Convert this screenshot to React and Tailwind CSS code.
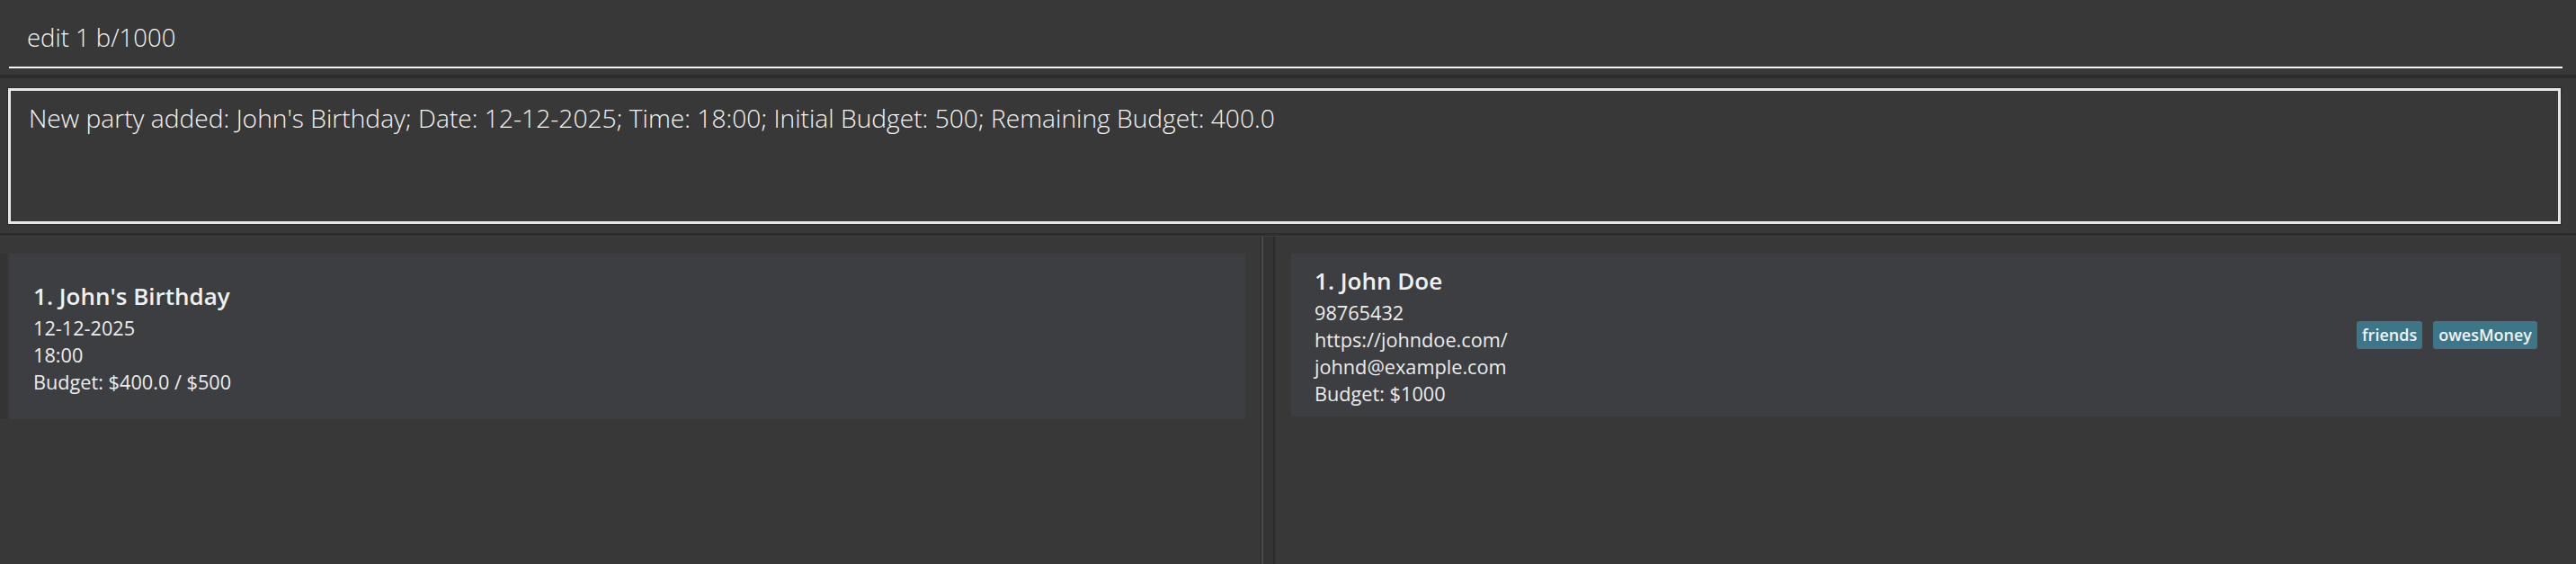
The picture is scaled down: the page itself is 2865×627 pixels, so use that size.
import React from 'react';

const parties = [
  { id: 1, name: "John's Birthday", date: '12-12-2025', time: '18:00', budget: 'Budget: $400.0 / $500' },
];

const persons = [
  {
    id: 1,
    name: 'John Doe',
    phone: '98765432',
    site: 'https://johndoe.com/',
    email: 'johnd@example.com',
    budget: 'Budget: $1000',
    tags: ['friends', 'owesMoney'],
  },
];

const PartyCard = ({ index, party }) => (
  <div className="flex h-[184px]">
    <div className="w-[8px] bg-[#333333]" />
    <div className="w-[2px]" />
    <div className="flex-1 bg-[#3c3e41] flex flex-col justify-center pl-[27px]">
      <div className="text-[26px] leading-[42px] font-semibold text-[#f0f0f0]">
        {index}. {party.name}
      </div>
      <div className="text-[21.7px] leading-[30px] text-[#ececec]">{party.date}</div>
      <div className="text-[21.7px] leading-[30px] text-[#ececec]">{party.time}</div>
      <div className="text-[21.7px] leading-[30px] text-[#ececec]">{party.budget}</div>
    </div>
  </div>
);

const PersonCard = ({ index, person }) => (
  <div className="flex h-[181px] bg-[#3c3e41] pl-[26px] pr-[26px]">
    <div className="flex-1 flex flex-col pt-[9px]">
      <div className="text-[26px] leading-[42px] font-semibold text-[#f0f0f0]">
        {index}. {person.name}
      </div>
      <div className="text-[21.7px] leading-[30px] text-[#ececec]">{person.phone}</div>
      <div className="text-[21.7px] leading-[30px] text-[#ececec]">{person.site}</div>
      <div className="text-[21.7px] leading-[30px] text-[#ececec]">{person.email}</div>
      <div className="text-[21.7px] leading-[30px] text-[#ececec]">{person.budget}</div>
    </div>
    <div className="flex items-center gap-[12px]">
      {person.tags.map((t) => (
        <span
          key={t}
          className="h-[31px] px-[6px] flex items-center rounded-[3px] bg-[#3e7689] text-[18px] font-semibold text-[#eef3f5]"
        >
          {t}
        </span>
      ))}
    </div>
  </div>
);

export default function App() {
  return (
    <div
      className="w-[2865px] h-[627px] bg-[#383838] flex flex-col overflow-hidden"
      style={{ fontFamily: '"Open Sans", Lato, sans-serif' }}
    >
      {/* Command box */}
      <div className="ml-[10px] mr-[15px] h-[76px] pt-[24px] border-b-2 border-[#f4f4f4]">
        <div className="pl-[20px] text-[27.5px] leading-[36px] font-light text-[#f5f5f5]">
          edit 1 b/1000
        </div>
      </div>
      <div className="h-[7px]" />
      <div className="h-[4px] bg-[#2d2d2d]" />
      <div className="h-[10px]" />

      {/* Result display */}
      <div className="ml-[8px] mr-[16px] h-[153px] border border-[#2b2b2b]">
        <div className="h-full border-[3px] border-[#e6e6e6] pt-[12px] pl-[20px]">
          <div className="text-[28.2px] leading-[36px] font-light text-[#f5f5f5]">
            New party added: John's Birthday; Date: 12-12-2025; Time: 18:00; Initial Budget: 500; Remaining Budget: 400.0
          </div>
        </div>
      </div>
      <div className="h-[9px]" />
      <div className="h-[3px] bg-[#2d2d2d]" />
      <div className="h-[1px] bg-[#404040]" />

      {/* Lists */}
      <div className="flex-1 flex">
        <div className="w-[1402px] pt-[19px] pr-[17px]">
          {parties.map((p, i) => (
            <PartyCard key={p.id} index={i + 1} party={p} />
          ))}
        </div>
        <div className="w-[1px] bg-[#2b2b2b]" />
        <div className="w-[2px] bg-[#4a4a4a]" />
        <div className="w-[11px] bg-[#333333]" />
        <div className="w-[2px] bg-[#2b2b2b]" />
        <div className="flex-1 pt-[19px] pl-[18px] pr-[17px]">
          {persons.map((p, i) => (
            <PersonCard key={p.id} index={i + 1} person={p} />
          ))}
        </div>
      </div>
    </div>
  );
}
